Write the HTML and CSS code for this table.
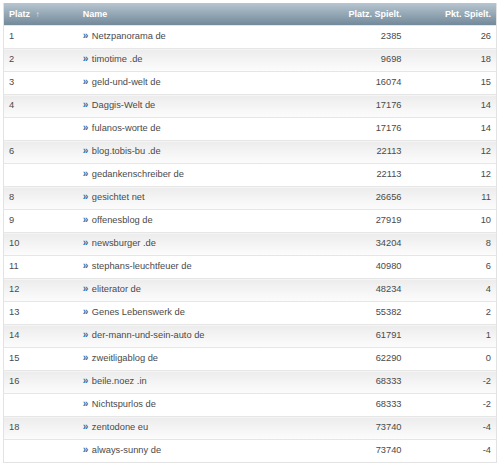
FILE: index.html
```html
<!DOCTYPE html>
<html>
<head>
<meta charset="utf-8">
<link rel="stylesheet" href="styles.css">
</head>
<body>
<table class="rank">
<thead>
<tr><th class="c-pos">Platz <span class="sort">&#8593;</span></th><th class="c-name">Name</th><th class="c-num">Platz. Spielt.</th><th class="c-pts">Pkt. Spielt.</th></tr>
</thead>
<tbody>
<tr><td class="c-pos">1</td><td class="c-name"><span class="ar">&raquo;</span> Netzpanorama de</td><td class="c-num">2385</td><td class="c-pts">26</td></tr>
<tr><td class="c-pos">2</td><td class="c-name"><span class="ar">&raquo;</span> timotime .de</td><td class="c-num">9698</td><td class="c-pts">18</td></tr>
<tr><td class="c-pos">3</td><td class="c-name"><span class="ar">&raquo;</span> geld-und-welt de</td><td class="c-num">16074</td><td class="c-pts">15</td></tr>
<tr><td class="c-pos">4</td><td class="c-name"><span class="ar">&raquo;</span> Daggis-Welt de</td><td class="c-num">17176</td><td class="c-pts">14</td></tr>
<tr><td class="c-pos"></td><td class="c-name"><span class="ar">&raquo;</span> fulanos-worte de</td><td class="c-num">17176</td><td class="c-pts">14</td></tr>
<tr><td class="c-pos">6</td><td class="c-name"><span class="ar">&raquo;</span> blog.tobis-bu .de</td><td class="c-num">22113</td><td class="c-pts">12</td></tr>
<tr><td class="c-pos"></td><td class="c-name"><span class="ar">&raquo;</span> gedankenschreiber de</td><td class="c-num">22113</td><td class="c-pts">12</td></tr>
<tr><td class="c-pos">8</td><td class="c-name"><span class="ar">&raquo;</span> gesichtet net</td><td class="c-num">26656</td><td class="c-pts">11</td></tr>
<tr><td class="c-pos">9</td><td class="c-name"><span class="ar">&raquo;</span> offenesblog de</td><td class="c-num">27919</td><td class="c-pts">10</td></tr>
<tr><td class="c-pos">10</td><td class="c-name"><span class="ar">&raquo;</span> newsburger .de</td><td class="c-num">34204</td><td class="c-pts">8</td></tr>
<tr><td class="c-pos">11</td><td class="c-name"><span class="ar">&raquo;</span> stephans-leuchtfeuer de</td><td class="c-num">40980</td><td class="c-pts">6</td></tr>
<tr><td class="c-pos">12</td><td class="c-name"><span class="ar">&raquo;</span> eliterator de</td><td class="c-num">48234</td><td class="c-pts">4</td></tr>
<tr><td class="c-pos">13</td><td class="c-name"><span class="ar">&raquo;</span> Genes Lebenswerk de</td><td class="c-num">55382</td><td class="c-pts">2</td></tr>
<tr><td class="c-pos">14</td><td class="c-name"><span class="ar">&raquo;</span> der-mann-und-sein-auto de</td><td class="c-num">61791</td><td class="c-pts">1</td></tr>
<tr><td class="c-pos">15</td><td class="c-name"><span class="ar">&raquo;</span> zweitligablog de</td><td class="c-num">62290</td><td class="c-pts">0</td></tr>
<tr><td class="c-pos">16</td><td class="c-name"><span class="ar">&raquo;</span> beile.noez .in</td><td class="c-num">68333</td><td class="c-pts">-2</td></tr>
<tr><td class="c-pos"></td><td class="c-name"><span class="ar">&raquo;</span> Nichtspurlos de</td><td class="c-num">68333</td><td class="c-pts">-2</td></tr>
<tr><td class="c-pos">18</td><td class="c-name"><span class="ar">&raquo;</span> zentodone eu</td><td class="c-num">73740</td><td class="c-pts">-4</td></tr>
<tr><td class="c-pos"></td><td class="c-name"><span class="ar">&raquo;</span> always-sunny de</td><td class="c-num">73740</td><td class="c-pts">-4</td></tr>
</tbody>
</table>
</body>
</html>
```
FILE: styles.css
```css
html, body { margin: 0; padding: 0; background: #fff; }
body { padding: 3px; font-family: "Liberation Sans", Arial, sans-serif; font-size: 9.3px; color: #4a4a4a; }
.rank { width: 494px; border-collapse: collapse; border: 1px solid #e2e2e2; border-top: none; }
.rank th { height: 22px; padding: 0 5px; text-align: left; color: #fff; font-weight: bold; font-size: 9px; background: linear-gradient(#b7c5d0, #72899a); }
.rank td { height: 19px; padding: 0 5px 3px; border-top: 1px solid #e6e6e6; }
.rank tbody tr:nth-child(even) td { background: linear-gradient(#ececec, #fcfcfc); }
.c-pos { width: 65px; }
.c-name { width: 175px; }
.rank .c-num { text-align: right; width: 140px; padding-right: 6px; }
.rank .c-pts { text-align: right; width: 80px; padding-right: 5px; }
.sort { color: #dfe6ec; font-size: 8px; margin-left: 3px; }
.ar { color: #2b6fa3; font-weight: bold; font-size: 10px; margin-right: 1px; }
```
